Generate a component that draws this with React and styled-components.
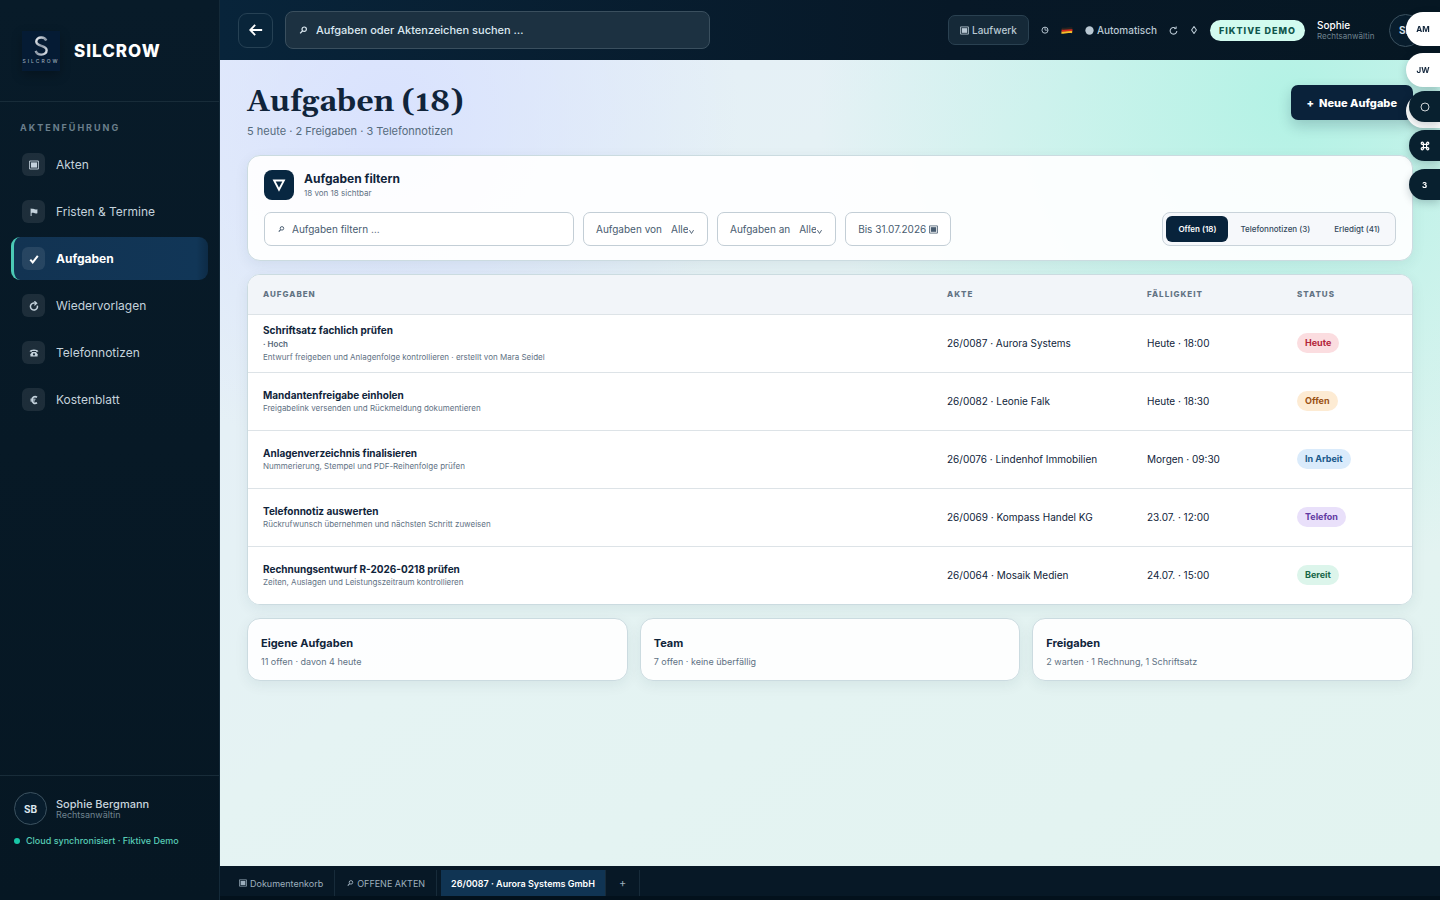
import * as React from 'react';
import styled, { createGlobalStyle, css } from 'styled-components';

const GlobalStyle = createGlobalStyle`
  *, *::before, *::after {
    box-sizing: border-box;
  }
  body {
    margin: 0;
    background: #071826;
    color: #10243a;
    font-family: Inter, 'Liberation Sans', sans-serif;
    font-size: 10px;
  }
  button, input, select {
    font-family: inherit;
    margin: 0;
  }
  h1, h2, h3, p {
    margin: 0;
  }
`;

const Shell = styled.div`
  display: grid;
  grid-template-columns: 220px minmax(0, 1fr);
  min-height: 100vh;
`;

/* Sidebar */

const Sidebar = styled.aside`
  display: flex;
  flex-direction: column;
  background: linear-gradient(180deg, #081b29, #061723);
  border-right: 1px solid #142a39;
`;
const Brand = styled.div`
  display: flex;
  align-items: center;
  gap: 14px;
  height: 102px;
  padding: 0 22px;
  border-bottom: 1px solid #182c39;
`;
const LogoBox = styled.div`
  width: 38px;
  height: 40px;
  background: #051b34;
  box-shadow: 0 4px 10px rgba(0, 0, 0, 0.25);
`;
const BrandName = styled.strong`
  color: #ffffff;
  font-size: 17px;
  font-weight: 800;
  letter-spacing: 1px;
`;
const NavTitle = styled.h2`
  padding: 20px 20px 8px;
  color: #6b7f8c;
  font-size: 9px;
  line-height: 12px;
  font-weight: 700;
  letter-spacing: 2px;
  text-transform: uppercase;
`;
const Nav = styled.nav`
  display: flex;
  flex-direction: column;
  gap: 4px;
  padding: 1px 11px;
  flex-grow: 1;
`;
const NavItem = styled.a`
  display: flex;
  align-items: center;
  gap: 11px;
  height: 43px;
  padding-left: 8px;
  border-left: 3px solid transparent;
  border-radius: 9px;
  color: #c4d2dc;
  font-size: 12px;
  font-weight: 400;
  text-decoration: none;
  ${(props) =>
    props.$active &&
    css`
      background: linear-gradient(90deg, #123352, #113657 94%, #0d2b46);
      border-left-color: #4bc9b5;
      color: #ffffff;
      font-weight: 700;
    `}
`;
const NavIcon = styled.span`
  display: grid;
  place-items: center;
  width: 23px;
  height: 23px;
  border-radius: 6px;
  background: rgba(255, 255, 255, 0.09);
`;
const Account = styled.div`
  height: 125px;
  padding: 16px 14px;
  border-top: 1px solid #182c39;
`;
const AccountRow = styled.div`
  display: flex;
  align-items: center;
  gap: 9px;
`;
const Avatar = styled.span`
  display: grid;
  place-items: center;
  flex-shrink: 0;
  width: 33px;
  height: 33px;
  border: 1px solid #3c5260;
  border-radius: 50%;
  background: #081d2d;
  color: #dce6ee;
  font-size: 10px;
  font-weight: 700;
`;
const Person = styled.div`
  min-width: 60px;
  color: ${(props) => props.$color || '#c9d5de'};
  font-size: ${(props) => (props.$small ? '10px' : '11px')};
  font-weight: 500;
  line-height: 12px;
  white-space: nowrap;
`;
const Role = styled.div`
  color: #70838f;
  font-size: ${(props) => (props.$small ? '8px' : '9px')};
  font-weight: 400;
  line-height: 10px;
`;
const SyncState = styled.p`
  display: flex;
  align-items: center;
  gap: 6px;
  margin-top: 10px;
  color: #58cdb6;
  font-size: 9px;
  font-weight: 500;
  line-height: 12px;
  &::before {
    content: '';
    width: 6px;
    height: 6px;
    border-radius: 50%;
    background: #19c6a7;
  }
`;

/* Top bar */

const Workspace = styled.div`
  display: flex;
  flex-direction: column;
  min-width: 0;
`;
const TopBar = styled.header`
  display: flex;
  align-items: center;
  gap: 12px;
  height: 60px;
  padding: 0 18px;
  background: linear-gradient(90deg, #08243a, #071827 60%, #061723);
`;
const BackButton = styled.button`
  display: grid;
  place-items: center;
  width: 35px;
  height: 35px;
  padding: 0;
  border: 1px solid #264154;
  border-radius: 9px;
  background: #09253a;
  color: #ffffff;
`;
const TopSearch = styled.label`
  display: flex;
  align-items: center;
  gap: 8px;
  width: 425px;
  height: 38px;
  padding: 0 12px;
  border: 1px solid #3a4f5e;
  border-radius: 8px;
  background: #1c3141;
  color: #dbe8f0;
  input {
    flex-grow: 1;
    min-width: 0;
    padding: 0;
    border: 0;
    outline: 0;
    background: none;
    color: inherit;
    font-size: 11px;
    font-weight: 500;
  }
  input::placeholder {
    color: inherit;
    opacity: 1;
  }
`;
const TopTools = styled.div`
  display: flex;
  align-items: center;
  gap: 12px;
  margin-left: auto;
`;
const ToolButton = styled.button`
  display: flex;
  align-items: center;
  gap: 3px;
  height: 30px;
  padding: ${(props) => (props.$boxed ? '0 11px' : '0')};
  border: ${(props) => (props.$boxed ? '1px solid #2a4151' : '0')};
  border-radius: 7px;
  background: ${(props) => (props.$boxed ? '#152938' : 'none')};
  color: #b9c8d3;
  font-size: 10px;
  font-weight: 500;
`;
const DemoBadge = styled.span`
  padding: 0 9px;
  border-radius: 11px;
  background: #d2fbef;
  color: #10564b;
  font-size: 9px;
  font-weight: 800;
  line-height: 21px;
  letter-spacing: 1px;
  white-space: nowrap;
`;

/* Page */

const Page = styled.main`
  flex-grow: 1;
  padding: 22px 27px;
  background:
    radial-gradient(circle at 14% 7%, rgba(215, 224, 255, 0.85), transparent 27%),
    radial-gradient(circle at 88% 5%, rgba(176, 242, 228, 0.95), transparent 36%),
    linear-gradient(145deg, #e5edf9, #e5f3f3 45%, #e2f3f0);
`;
const PageHead = styled.div`
  display: flex;
  justify-content: space-between;
  align-items: flex-start;
  height: 73px;
  padding-top: 3px;
`;
const Title = styled.h1`
  color: #10243a;
  font-family: Georgia, Gelasio, 'Liberation Serif', serif;
  font-size: 30px;
  font-weight: 700;
  line-height: 34px;
`;
const Summary = styled.p`
  margin-top: 5px;
  color: #566b7c;
  font-size: 11px;
  line-height: 14px;
`;
const PrimaryButton = styled.button`
  display: flex;
  align-items: center;
  gap: 5px;
  height: 35px;
  padding: 0 16px;
  border: 0;
  border-radius: 7px;
  background: #0a223a;
  box-shadow: 0 6px 14px rgba(10, 34, 58, 0.2);
  color: #ffffff;
  font-size: 11px;
  font-weight: 800;
`;
const Card = styled.section`
  border: 1px solid #cbdbe0;
  border-radius: 13px;
  background: rgba(255, 255, 255, 0.92);
  box-shadow: 0 4px 14px rgba(16, 50, 70, 0.07);
`;
const FilterCard = styled(Card)`
  padding: 14px 16px;
`;
const FilterHead = styled.div`
  display: flex;
  align-items: center;
  gap: 10px;
`;
const FilterBadge = styled.span`
  display: grid;
  place-items: center;
  width: 30px;
  height: 30px;
  border-radius: 8px;
  background: #082741;
  color: #ffffff;
`;
const CardTitle = styled.h2`
  font-size: ${(props) => (props.$small ? '11px' : '12px')};
  font-weight: 700;
  line-height: 16px;
`;
const Muted = styled.p`
  color: #5f7284;
  font-size: ${(props) => (props.$size || 8) + 'px'};
  line-height: 12px;
`;
const FilterRow = styled.div`
  display: flex;
  flex-wrap: wrap;
  align-items: center;
  gap: 9px;
  margin-top: 12px;
`;
const field = css`
  display: flex;
  align-items: center;
  height: 34px;
  padding: 0 12px;
  border: 1px solid #c3ced6;
  border-radius: 7px;
  background: #ffffff;
  color: #485c70;
  font-size: 10px;
`;
const FilterSearch = styled.label`
  ${field}
  gap: 7px;
  width: 310px;
  input {
    flex-grow: 1;
    min-width: 0;
    padding: 0;
    border: 0;
    outline: 0;
    background: none;
    color: inherit;
    font-size: 10px;
  }
  input::placeholder {
    color: inherit;
    opacity: 1;
  }
`;
const FilterSelect = styled.label`
  ${field}
  select {
    width: 17px;
    margin-left: 9px;
    padding: 0;
    border: 0;
    outline: 0;
    appearance: none;
    background: none;
    color: inherit;
    font-size: 10px;
  }
  svg {
    margin-top: 5px;
  }
`;
const DateButton = styled.button`
  ${field}
  gap: 3px;
`;
const Segments = styled.div`
  display: flex;
  height: 34px;
  margin-left: auto;
  padding: 3px;
  border: 1px solid #c9d3da;
  border-radius: 8px;
  background: #f6f8fb;
`;
const Segment = styled.button`
  padding: 0 12px;
  border: 0;
  border-radius: 6px;
  background: ${(props) => (props.$active ? '#08233b' : 'none')};
  color: ${(props) => (props.$active ? '#ffffff' : '#34495c')};
  font-size: 8px;
  font-weight: ${(props) => (props.$active ? 600 : 500)};
`;

const TableCard = styled(Card)`
  margin-top: 13px;
  overflow: hidden;
`;
const Table = styled.table`
  width: 100%;
  border-collapse: collapse;
  table-layout: fixed;
  th {
    height: 39px;
    padding: 0 15px;
    background: #f2f5f9;
    color: #627384;
    font-size: 8px;
    font-weight: 800;
    letter-spacing: 1px;
    text-align: left;
    text-transform: uppercase;
  }
  td {
    height: 58px;
    padding: 0 15px;
    border-top: 1px solid #dde3e7;
    background: #ffffff;
    font-size: 10px;
  }
`;
const Col = styled.col`
  width: ${(props) => props.$width};
`;
const TaskName = styled.div`
  font-weight: 700;
  line-height: 14px;
`;
const Priority = styled.div`
  color: #566879;
  font-size: 8px;
  font-weight: 600;
  line-height: 14px;
`;
const pillColors = {
  red: ['#fbdde0', '#b3253a'],
  orange: ['#fdebd3', '#995013'],
  blue: ['#daebfb', '#185789'],
  violet: ['#e9e0fa', '#623aa2'],
  green: ['#dcf5eb', '#176647'],
};
const Pill = styled.span`
  display: inline-block;
  padding: 0 8px;
  border-radius: 10px;
  background: ${(props) => pillColors[props.$tone][0]};
  color: ${(props) => pillColors[props.$tone][1]};
  font-size: 9px;
  font-weight: 700;
  line-height: 20px;
`;
const StatGrid = styled.div`
  display: grid;
  grid-template-columns: repeat(3, 1fr);
  gap: 12px;
  margin-top: 13px;
`;
const StatCard = styled(Card)`
  height: 63px;
  padding: 16px 13px;
  ${Muted} {
    margin-top: 5px;
  }
`;

/* Bottom tabs */

const TabBar = styled.footer`
  display: flex;
  height: 34px;
  padding: 4px 8px 0;
  background: #071826;
  border-bottom: 4px solid #03111c;
`;
const Tab = styled.button`
  display: flex;
  align-items: center;
  gap: 3px;
  padding: 0 ${(props) => props.$pad || '11px'};
  margin-right: ${(props) => props.$gap || '0'};
  border: 0;
  border-right: 1px solid #172b3a;
  background: ${(props) => (props.$active ? '#103453' : 'none')};
  color: ${(props) => (props.$active ? '#ffffff' : '#9dafbd')};
  font-size: ${(props) => (props.$large ? '11px' : '9px')};
  font-weight: ${(props) => (props.$active ? 600 : 400)};
`;

/* Launcher buttons that overlay the right window edge */

const Dock = styled.div`
  position: fixed;
  top: ${(props) => props.$top};
  right: 0;
  display: flex;
  flex-direction: column;
  gap: ${(props) => props.$gap};
`;
const DockButton = styled.button`
  display: grid;
  place-items: center;
  width: ${(props) => (props.$dark ? '31px' : '34px')};
  height: ${(props) => (props.$dark ? '31px' : '34px')};
  padding: 0;
  border: 0;
  border-radius: 17px 0 0 17px;
  background: ${(props) => (props.$dark ? '#08202f' : '#ffffff')};
  box-shadow: 0 3px 9px rgba(8, 32, 47, 0.22);
  color: ${(props) => (props.$dark ? '#ffffff' : '#10243a')};
  font-size: 8px;
  font-weight: 700;
`;

function Icon({ name, size = 10 }) {
  const line = { fill: 'none', stroke: 'currentColor', strokeWidth: 1.3 };
  const shapes = {
    square: (
      <>
        <path d="M.6 1h8.8v8H.6z" {...line} strokeWidth="0.9" />
        <path d="M2 2.4h6v5.2H2z" fill="currentColor" />
      </>
    ),
    flag: <path d="M1.6 1.4h1v.6c1.8-.6 2.700.9 5.800.2v4c-2.800.8-3.900-.8-5.800-.2v3h-1z" fill="currentColor" />,
    check: <path d="M1.3 5.6 3.7 8.4 8.8 1.8" {...line} strokeWidth="2" />,
    redo: (
      <>
        <path d="M8.3 4.600A3.500 3.500 0 1 1 4.800 2.100" {...line} strokeWidth="1.5" />
        <path d="M4.300 2.200H7.600M5.400.2 7.700 2.200 5.400 4.400" {...line} strokeWidth="1.2" />
      </>
    ),
    refresh: (
      <>
        <path d="M7.4 2.500A3.700 3.700 0 1 0 8.700 5.500" {...line} strokeWidth="1.2" />
        <path d="M5.700 2.900h2.300V.5" {...line} strokeWidth="1.1" />
      </>
    ),
    phone: (
      <>
        <path d="M.6 3.6C.7.9 9.3.9 9.4 3.6L7.2 4.1V2.9H2.8v1.2z" fill="currentColor" />
        <path d="M3 4h4L8.600 6.200V8.600H1.400V6.200z" fill="currentColor" />
        <circle cx="5" cy="6.400" r="1.100" fill="#1d2f3c" />
      </>
    ),
    euro: (
      <>
        <path d="M8 2.300C5.500.8 3.100 2.300 3.100 5s2.400 4.200 4.900 2.700" {...line} strokeWidth="1.8" />
        <path d="M1.300 4.200h5.200M1.300 5.900h4.700" {...line} strokeWidth="1" />
      </>
    ),
    search: (
      <>
        <circle cx="6.200" cy="4.200" r="2.200" {...line} strokeWidth="1.200" />
        <path d="M4.600 5.800 2.200 8.400" {...line} strokeWidth="1.300" />
      </>
    ),
    back: <path d="M9.400 5H1M4.400 1.400.9 5l3.500 3.600" {...line} strokeWidth="1.300" />,
    clock: (
      <>
        <circle cx="5" cy="5.200" r="3.800" {...line} strokeWidth="1.200" />
        <path d="M5 1.400v3.800h3.800" {...line} strokeWidth="1" />
      </>
    ),
    dot: <circle cx="5" cy="5" r="4.600" fill="currentColor" />,
    diamond: <path d="M5 .6 8 5 5 9.400 2 5z" {...line} strokeWidth="1.300" />,
    filter: <path d="M1.500 1.800h7L5 8.400z" {...line} />,
    chevron: <path d="M2 3 5 7.800 8 3" {...line} strokeWidth="1.300" />,
    circle: <circle cx="5" cy="5" r="4" {...line} strokeWidth="0.800" />,
    command: (
      <path
        d="M3.400 3.400h3.200v3.200H3.400zM3.400 3.400H2.200a1.100 1.100 0 1 1 1.200-1.200zM6.600 3.400V2.200a1.100 1.100 0 1 1 1.200 1.200zM6.600 6.600h1.200a1.100 1.100 0 1 1-1.200 1.200zM3.400 6.600v1.200a1.100 1.100 0 1 1-1.200-1.200z"
        {...line}
        strokeWidth="1.200"
      />
    ),
  };
  return (
    <svg width={size} height={size} viewBox="0 0 10 10" aria-hidden="true">
      {shapes[name]}
    </svg>
  );
}

function GermanFlag() {
  return (
    <svg width="12" height="9" viewBox="0 0 13 10" aria-hidden="true">
      <path d="M.8 1.800c3.600.8 7.600-1 11.700-.4v2.600c-4-.5-8 1.200-12.100.5z" fill="#242321" />
      <path d="M.6 4c4 .8 8-1 12-.4v2.300c-4-.5-8 1.200-12.200.5z" fill="#d92b1c" />
      <path d="M.4 6.200c4 .8 8-1 12-.4L12.100 8C8 7.400 4.200 9.200.2 8.500z" fill="#f6bd2b" />
    </svg>
  );
}

function Logo() {
  return (
    <LogoBox>
      <svg width="38" height="40" viewBox="0 0 38 40" role="img" aria-label="Silcrow">
        <defs>
          <linearGradient id="silver" x1="0" y1="0" x2="1" y2="1">
            <stop offset="0" stopColor="#f2f5f8" />
            <stop offset="0.5" stopColor="#8b96a5" />
            <stop offset="1" stopColor="#dfe5ec" />
          </linearGradient>
        </defs>
        <path
          d="M24.200 9.500c-.7-2-2.600-3-4.900-3-3 0-5 1.700-5 4.100 0 5.500 10.300 3.100 10.300 8.700 0 2.600-2.200 4.300-5.300 4.300-2.800 0-4.900-1.400-5.600-3.700"
          fill="none"
          stroke="url(#silver)"
          strokeWidth="2.400"
        />
        <text x="19" y="32" textAnchor="middle" fontSize="5" fontWeight="500" letterSpacing="2" fill="#9aa8b8">
          SILCROW
        </text>
      </svg>
    </LogoBox>
  );
}

const navItems = [
  { icon: 'square', label: 'Akten' },
  { icon: 'flag', label: 'Fristen & Termine' },
  { icon: 'check', label: 'Aufgaben', active: true },
  { icon: 'redo', label: 'Wiedervorlagen' },
  { icon: 'phone', label: 'Telefonnotizen' },
  { icon: 'euro', label: 'Kostenblatt' },
];

const tasks = [
  {
    name: 'Schriftsatz fachlich prüfen',
    priority: '· Hoch',
    text: 'Entwurf freigeben und Anlagenfolge kontrollieren · erstellt von Mara Seidel',
    file: '26/0087 · Aurora Systems',
    due: 'Heute · 18:00',
    status: 'Heute',
    tone: 'red',
  },
  {
    name: 'Mandantenfreigabe einholen',
    text: 'Freigabelink versenden und Rückmeldung dokumentieren',
    file: '26/0082 · Leonie Falk',
    due: 'Heute · 18:30',
    status: 'Offen',
    tone: 'orange',
  },
  {
    name: 'Anlagenverzeichnis finalisieren',
    text: 'Nummerierung, Stempel und PDF-Reihenfolge prüfen',
    file: '26/0076 · Lindenhof Immobilien',
    due: 'Morgen · 09:30',
    status: 'In Arbeit',
    tone: 'blue',
  },
  {
    name: 'Telefonnotiz auswerten',
    text: 'Rückrufwunsch übernehmen und nächsten Schritt zuweisen',
    file: '26/0069 · Kompass Handel KG',
    due: '23.07. · 12:00',
    status: 'Telefon',
    tone: 'violet',
  },
  {
    name: 'Rechnungsentwurf R-2026-0218 prüfen',
    text: 'Zeiten, Auslagen und Leistungszeitraum kontrollieren',
    file: '26/0064 · Mosaik Medien',
    due: '24.07. · 15:00',
    status: 'Bereit',
    tone: 'green',
  },
];

const stats = [
  { title: 'Eigene Aufgaben', text: '11 offen · davon 4 heute' },
  { title: 'Team', text: '7 offen · keine überfällig' },
  { title: 'Freigaben', text: '2 warten · 1 Rechnung, 1 Schriftsatz' },
];

function SideNav() {
  return (
    <Sidebar>
      <Brand>
        <Logo />
        <BrandName>SILCROW</BrandName>
      </Brand>
      <NavTitle>Aktenführung</NavTitle>
      <Nav>
        {navItems.map((item) => (
          <NavItem href="#" key={item.label} $active={item.active}>
            <NavIcon>
              <Icon name={item.icon} />
            </NavIcon>
            {item.label}
          </NavItem>
        ))}
      </Nav>
      <Account>
        <AccountRow>
          <Avatar>SB</Avatar>
          <div>
            <Person>Sophie Bergmann</Person>
            <Role>Rechtsanwältin</Role>
          </div>
        </AccountRow>
        <SyncState>Cloud synchronisiert · Fiktive Demo</SyncState>
      </Account>
    </Sidebar>
  );
}

function Header() {
  return (
    <TopBar>
      <BackButton aria-label="Zurück">
        <Icon name="back" size={14} />
      </BackButton>
      <TopSearch>
        <Icon name="search" />
        <input aria-label="Suche" placeholder="Aufgaben oder Aktenzeichen suchen …" />
      </TopSearch>
      <TopTools>
        <ToolButton $boxed>
          <Icon name="square" size={9} />
          Laufwerk
        </ToolButton>
        <ToolButton aria-label="Verlauf">
          <Icon name="clock" size={8} />
        </ToolButton>
        <ToolButton aria-label="Deutsch">
          <GermanFlag />
        </ToolButton>
        <ToolButton>
          <Icon name="dot" size={9} />
          Automatisch
        </ToolButton>
        <ToolButton aria-label="Aktualisieren">
          <Icon name="refresh" size={9} />
        </ToolButton>
        <ToolButton aria-label="Hinweise">
          <Icon name="diamond" size={8} />
        </ToolButton>
        <DemoBadge>FIKTIVE DEMO</DemoBadge>
        <div>
          <Person $small $color="#ffffff">
            Sophie
          </Person>
          <Role $small>Rechtsanwältin</Role>
        </div>
        <Avatar>SB</Avatar>
      </TopTools>
    </TopBar>
  );
}

function Filters() {
  return (
    <FilterCard>
      <FilterHead>
        <FilterBadge>
          <Icon name="filter" size={14} />
        </FilterBadge>
        <div>
          <CardTitle>Aufgaben filtern</CardTitle>
          <Muted>18 von 18 sichtbar</Muted>
        </div>
      </FilterHead>
      <FilterRow>
        <FilterSearch>
          <Icon name="search" size={8} />
          <input aria-label="Aufgaben filtern" placeholder="Aufgaben filtern …" />
        </FilterSearch>
        <FilterSelect>
          Aufgaben von
          <select>
            <option>Alle</option>
          </select>
          <Icon name="chevron" size={7} />
        </FilterSelect>
        <FilterSelect>
          Aufgaben an
          <select>
            <option>Alle</option>
          </select>
          <Icon name="chevron" size={7} />
        </FilterSelect>
        <DateButton>
          Bis 31.07.2026
          <Icon name="square" size={9} />
        </DateButton>
        <Segments>
          <Segment $active>Offen (18)</Segment>
          <Segment>Telefonnotizen (3)</Segment>
          <Segment>Erledigt (41)</Segment>
        </Segments>
      </FilterRow>
    </FilterCard>
  );
}

function TaskTable() {
  return (
    <TableCard>
      <Table>
        <colgroup>
          <Col $width="auto" />
          <Col $width="200px" />
          <Col $width="150px" />
          <Col $width="130px" />
        </colgroup>
        <thead>
          <tr>
            <th>Aufgaben</th>
            <th>Akte</th>
            <th>Fälligkeit</th>
            <th>Status</th>
          </tr>
        </thead>
        <tbody>
          {tasks.map((task) => (
            <tr key={task.name}>
              <td>
                <TaskName>{task.name}</TaskName>
                {task.priority && <Priority>{task.priority}</Priority>}
                <Muted>{task.text}</Muted>
              </td>
              <td>{task.file}</td>
              <td>{task.due}</td>
              <td>
                <Pill $tone={task.tone}>{task.status}</Pill>
              </td>
            </tr>
          ))}
        </tbody>
      </Table>
    </TableCard>
  );
}

function App() {
  return (
    <>
      <GlobalStyle />
      <Shell>
        <SideNav />
        <Workspace>
          <Header />
          <Page>
            <PageHead>
              <div>
                <Title>Aufgaben (18)</Title>
                <Summary>5 heute · 2 Freigaben · 3 Telefonnotizen</Summary>
              </div>
              <PrimaryButton>
                <span>+</span> Neue Aufgabe
              </PrimaryButton>
            </PageHead>
            <Filters />
            <TaskTable />
            <StatGrid>
              {stats.map((stat) => (
                <StatCard key={stat.title}>
                  <CardTitle $small>{stat.title}</CardTitle>
                  <Muted $size={9}>{stat.text}</Muted>
                </StatCard>
              ))}
            </StatGrid>
          </Page>
          <TabBar>
            <Tab>
              <Icon name="square" size={8} />
              Dokumentenkorb
            </Tab>
            <Tab $gap="4px">
              <Icon name="search" size={8} />
              OFFENE AKTEN
            </Tab>
            <Tab $active $pad="10px">
              26/0087 · Aurora Systems GmbH
            </Tab>
            <Tab $large $pad="13px" aria-label="Neuer Tab">
              +
            </Tab>
          </TabBar>
        </Workspace>
      </Shell>
      <Dock $top="12px" $gap="7px">
        <DockButton>AM</DockButton>
        <DockButton>JW</DockButton>
        <DockButton aria-label="Weitere Kontakte" />
      </Dock>
      <Dock $top="91px" $gap="8px">
        <DockButton $dark aria-label="Status">
          <Icon name="circle" />
        </DockButton>
        <DockButton $dark aria-label="Befehle">
          <Icon name="command" />
        </DockButton>
        <DockButton $dark>3</DockButton>
      </Dock>
    </>
  );
}
export default App;
